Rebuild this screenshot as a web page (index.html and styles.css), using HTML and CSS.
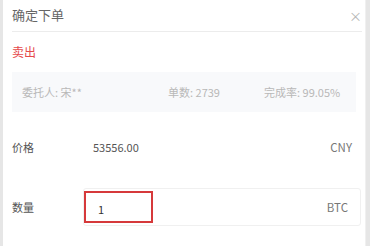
FILE: index.html
```html
<!DOCTYPE html>
<html>
  <head>
    <title>确定下单</title>
    <link rel="stylesheet" href="styles.css">
  </head>
  <body>
    <div class="dialog">
      <div class="header">
        <span class="title">确定下单</span>
        <span class="close">×</span>
      </div>

      <p class="side">卖出</p>

      <div class="trader">
        <span class="trader-name">委托人: 宋**</span>
        <span class="trader-count">单数: 2739</span>
        <span class="trader-rate">完成率: 99.05%</span>
      </div>

      <div class="row price-row">
        <span class="label">价格</span>
        <span class="value">53556.00</span>
        <span class="unit">CNY</span>
      </div>

      <div class="row amount-row">
        <span class="label">数量</span>
        <div class="amount-box">
          <span class="amount-input">1</span>
          <span class="unit">BTC</span>
        </div>
      </div>
    </div>
  </body>
</html>
```

FILE: styles.css
```css
/* order confirm dialog */
body{
  margin: 0;
  background-color: #e6e6e6;
  font-family: "Noto Sans CJK SC", "Noto Sans", sans-serif;
}

.dialog{
  margin-left: 3px;
  width: 363px;
  height: 246px;
  background-color: white;
  border-right: 1px solid #f0f0f0;
  padding: 0 9px;
  box-sizing: border-box;
  overflow: hidden;
}

.header{
  display: flex;
  justify-content: space-between;
  align-items: center;
  height: 31px;
  border-bottom: 1px solid #ececec;
  margin-right: -6px;
}

.title{
  font-size: 13px;
  color: #666;
  padding-bottom: 3px;
}

.close{
  font-size: 13px;
  color: #b5b5b5;
}

.side{
  /* sell label */
  margin: 11px 0 0;
  font-size: 12px;
  color: #e5494b;
  height: 18px;
  line-height: 18px;
}

.trader{
  display: flex;
  align-items: center;
  margin-top: 11px;
  height: 40px;
  background-color: #f8f9fb;
  padding: 0 10px;
  font-size: 11px;
  color: #b8b8b8;
}

.trader-name{
  width: 146px;
}

.trader-count{
  width: 96px;
}

.row{
  display: flex;
  align-items: center;
  font-size: 11px;
  color: #555;
}

.price-row{
  margin-top: 17px;
  height: 36px;
}

.label{
  width: 71px;
}

.value{
  flex: 1;
  padding-left: 10px;
}

.unit{
  color: #777;
  margin-right: 4px;
  font-size: 11.5px;
}

.amount-row{
  margin-top: 23px;
  height: 38px;
}

.amount-box{
  flex: 1;
  display: flex;
  justify-content: space-between;
  align-items: center;
  height: 38px;
  border: 1px solid #f0f0f0;
  border-radius: 3px;
  margin-right: -5px;
  padding-right: 8px;
  box-sizing: border-box;
}

.amount-input{
  /* focused field */
  width: 69px;
  height: 32px;
  line-height: 32px;
  border: 2px solid #d6393b;
  box-sizing: border-box;
  padding-left: 12px;
  color: #333;
}
```
